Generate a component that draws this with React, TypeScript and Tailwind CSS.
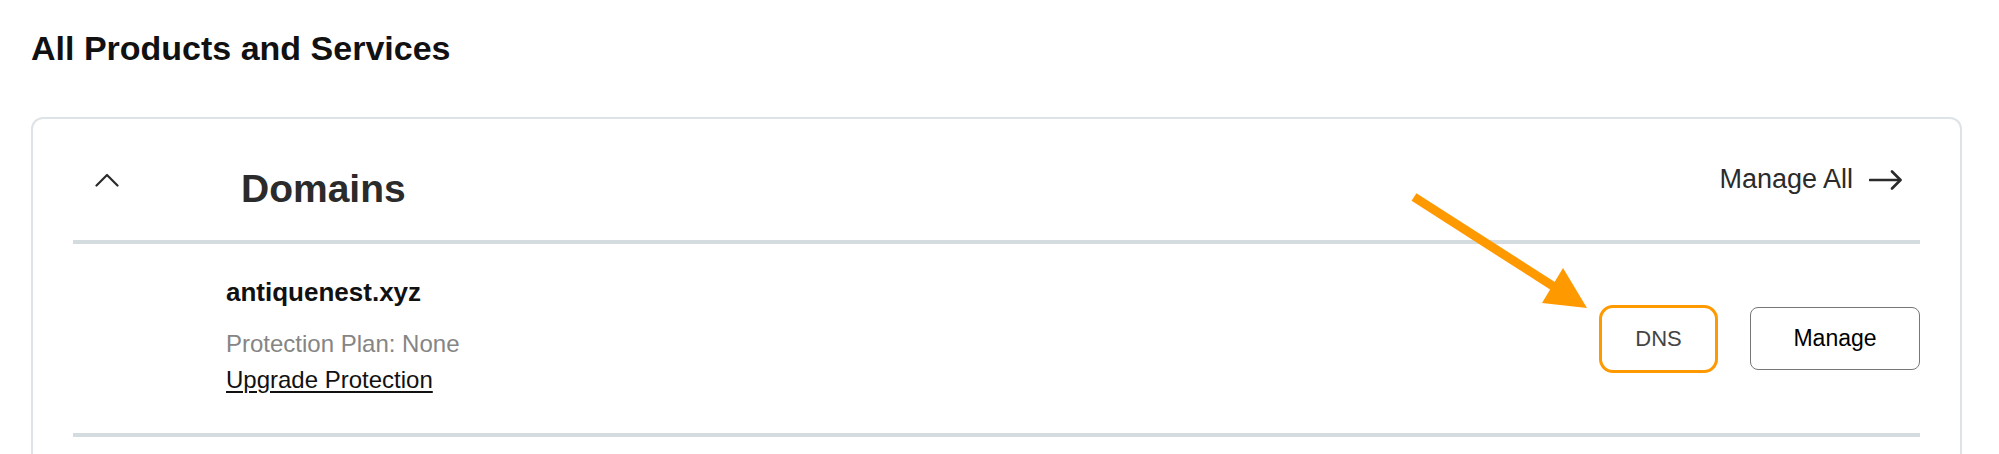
const font = { fontFamily: '"Liberation Sans", Arial, sans-serif' };

function ChevronUp() {
  return (
    <svg width="24" height="14" viewBox="0 0 24 14" fill="none">
      <polyline points="1.5,12.5 12,2 22.5,12.5" stroke="#2b2b2b" strokeWidth="2.2" strokeLinecap="round" strokeLinejoin="round" />
    </svg>
  );
}

function ArrowRight() {
  return (
    <svg width="34" height="20" viewBox="0 0 34 20" fill="none">
      <line x1="1" y1="10" x2="31" y2="10" stroke="#2b2b2b" strokeWidth="2.6" strokeLinecap="round" />
      <polyline points="23,1.5 31.5,10 23,18.5" stroke="#2b2b2b" strokeWidth="2.6" strokeLinecap="round" strokeLinejoin="round" />
    </svg>
  );
}

// orange annotation arrow pointing at the DNS button
function Callout() {
  return (
    <svg className="pointer-events-none absolute left-0 top-0" width="1999" height="454" viewBox="0 0 1999 454">
      <line x1="1414" y1="197" x2="1556" y2="288" stroke="#ff9900" strokeWidth="9" />
      <polygon points="1587,308 1563,268 1542,303" fill="#ff9900" />
    </svg>
  );
}

export default function App() {
  return (
    <div className="relative h-[454px] w-[1999px] overflow-hidden bg-white pl-[31px]" style={font}>
      {/* Title */}
      <h1 className="pt-[28px] text-[34px] font-bold leading-[40px] text-[#111]">All Products and Services</h1>

      {/* Card */}
      <div className="mt-[49px] w-[1931px] rounded-[12px] border-2 border-[#dde3e7] px-[40px] pb-[60px]">
        {/* Header */}
        <div className="flex h-[121px] items-center">
          <div className="w-[168px] pl-[22px]">
            <ChevronUp />
          </div>
          <h2 className="mt-[17px] text-[39px] font-bold leading-[39px] text-[#2b2b2b]">Domains</h2>
          <div className="ml-auto flex items-center gap-[16px] pr-[17px] text-[27px] leading-[27px] text-[#2b2b2b]">
            <span>Manage All</span>
            <ArrowRight />
          </div>
        </div>
        <div className="h-[4px] bg-[#d5dce0]" />

        {/* Row */}
        <div className="flex h-[189px] items-center pl-[153px]">
          <div className="-mt-[5px] flex flex-col">
            <span className="text-[26px] font-bold leading-[30px] text-[#111]">antiquenest.xyz</span>
            <span className="mt-[22px] text-[24px] leading-[30px] text-[#858585]">Protection Plan: None</span>
            <a className="mt-[6px] text-[24px] leading-[30px] text-[#111] underline underline-offset-[3px]">Upgrade Protection</a>
          </div>
          <div className="ml-auto flex items-center gap-[32px]">
            <button className="h-[68px] w-[119px] rounded-[14px] border-[3px] border-[#ff9900] text-[22px] text-[#444]">DNS</button>
            <button className="h-[63px] w-[170px] rounded-[8px] border-[1.5px] border-[#777] text-[23px] text-[#000]">Manage</button>
          </div>
        </div>
        <div className="h-[4px] bg-[#d5dce0]" />
      </div>

      <Callout />
    </div>
  );
}
